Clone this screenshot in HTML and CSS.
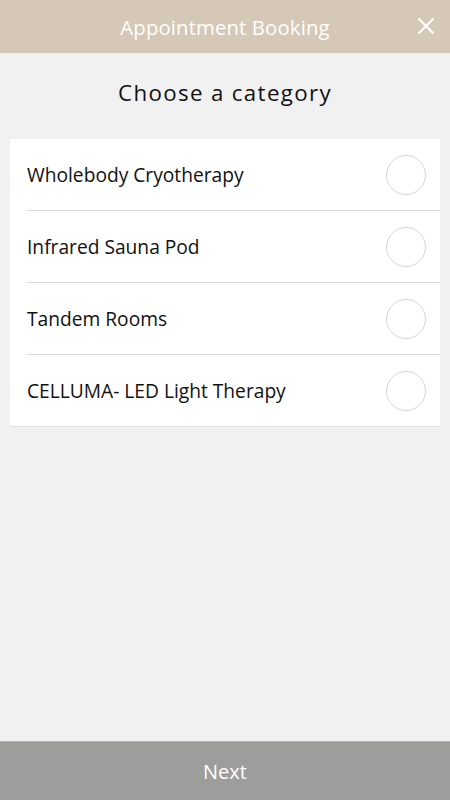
FILE: index.html
```html
<!DOCTYPE html>
<html>
<head>
<meta charset="utf-8">
<link rel="stylesheet" href="styles.css">
</head>
<body>
<div class="app">
  <header class="topbar">
    <div class="title">Appointment Booking</div>
    <svg class="close" width="18" height="18" viewBox="0 0 18 18"><path d="M1.5 1.5 L16.5 16.5 M16.5 1.5 L1.5 16.5" stroke="#fff" stroke-width="2.2" fill="none"/></svg>
  </header>
  <main class="content">
    <h1 class="heading">Choose a category</h1>
    <ul class="card">
      <li class="row"><span class="label">Wholebody Cryotherapy</span><span class="radio"></span></li>
      <li class="row"><span class="label">Infrared Sauna Pod</span><span class="radio"></span></li>
      <li class="row"><span class="label">Tandem Rooms</span><span class="radio"></span></li>
      <li class="row"><span class="label">CELLUMA- LED Light Therapy</span><span class="radio"></span></li>
    </ul>
  </main>
  <footer class="footer">Next</footer>
</div>
</body>
</html>
```
FILE: styles.css
```css
* { box-sizing: border-box; }
html, body { margin: 0; padding: 0; }
body {
  font-family: "Open Sans", "Noto Sans", sans-serif;
  background: #f1f1f1;
}
.app {
  display: flex;
  flex-direction: column;
  height: 800px;
}
.topbar {
  position: relative;
  height: 53px;
  background: #d5c8b7;
  display: flex;
  align-items: center;
  justify-content: center;
}
.title {
  color: #fff;
  font-size: 20.3px;
  letter-spacing: 0.15px;
}
.close {
  position: absolute;
  right: 15px;
  top: 17px;
}
.content {
  flex: 1;
  padding: 0 10px;
}
.heading {
  margin: 0;
  height: 86px;
  padding-bottom: 7px;
  font-weight: 400;
  font-size: 22.3px;
  letter-spacing: 1.35px;
  color: #111;
  display: flex;
  align-items: center;
  justify-content: center;
}
.card {
  list-style: none;
  margin: 0;
  padding: 0 0 0 16px;
  background: #fff;
  border-bottom: 1px solid #e2e2e2;
}
.row {
  height: 72px;
  display: flex;
  align-items: center;
  justify-content: space-between;
  padding-right: 14px;
  border-bottom: 1px solid #dcdcdc;
}
.row:last-child { border-bottom: none; height: 71px; }
.label {
  font-size: 19.2px;
  color: #111;
  padding-left: 1px;
}
.radio {
  width: 40px;
  height: 40px;
  border: 1px solid #d6d6d6;
  border-radius: 50%;
}
.footer {
  height: 59px;
  background: #9d9d9b;
  border-top: 1px solid #b5b5b3;
  color: #fff;
  font-size: 20px;
  display: flex;
  align-items: center;
  justify-content: center;
}
```
